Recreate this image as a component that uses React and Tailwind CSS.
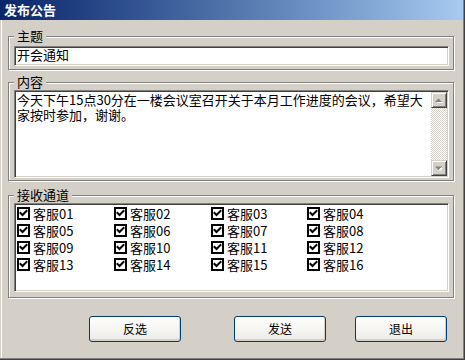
import React from "react";

const font = "font-['SimSun','Noto_Sans_CJK_SC',sans-serif]";

function Group({ label, height, children, className = "" }) {
  return (
    <div
      className={`relative w-[446px] border border-[#808080] shadow-[1px_1px_0_#ffffff,inset_1px_1px_0_#ffffff] ${className}`}
      style={{ height }}
    >
      <div className="absolute left-[5px] top-[-8px] px-[3px] bg-[#d4d0c8] leading-[14px] text-[13px] text-black">
        {label}
      </div>
      {children}
    </div>
  );
}

const sunken =
  "border border-t-[#808080] border-l-[#808080] border-b-white border-r-white shadow-[inset_1px_1px_0_#404040,inset_-1px_-1px_0_#d4d0c8]";

function ScrollBtn({ up }) {
  return (
    <div className="w-[16px] h-[16px] bg-[#d4d0c8] border border-t-[#d4d0c8] border-l-[#d4d0c8] border-b-[#404040] border-r-[#404040] shadow-[inset_1px_1px_0_#ffffff,inset_-1px_-1px_0_#808080] flex items-center justify-center">
      <svg width="8" height="5" viewBox="0 0 8 5">
        {up ? (
          <>
            <path d="M1 5 L4 2 L7 5 Z" fill="#ffffff" transform="translate(1,0)" />
            <path d="M0 4 L3.5 0.5 L7 4 Z" fill="#808080" />
          </>
        ) : (
          <>
            <path d="M1 1 L4 4 L7 1 Z" fill="#ffffff" transform="translate(1,1)" />
            <path d="M0 0.5 L3.5 4 L7 0.5 Z" fill="#808080" />
          </>
        )}
      </svg>
    </div>
  );
}

function Check({ label }) {
  return (
    <div className="flex items-center h-[17px]">
      <div className="w-[13px] h-[13px] border-2 border-black bg-white flex items-center justify-center shrink-0">
        <svg width="9" height="9" viewBox="0 0 9 9">
          <path d="M1.5 4 L3.5 6 L7.5 2" stroke="#000" strokeWidth="2" fill="none" strokeLinecap="square" />
        </svg>
      </div>
      <span className="ml-[3px] leading-[17px] text-[13px] text-black">{label}</span>
    </div>
  );
}

function Button({ children, className = "" }) {
  return (
    <div
      className={`w-[92px] h-[26px] rounded-[3px] border border-[#003c74] bg-gradient-to-b from-[#ffffff] to-[#ecebe6] shadow-[inset_-1px_-2px_0_#d6d0c5] flex items-center justify-center text-[12px] text-black ${className}`}
    >
      {children}
    </div>
  );
}

export default function App() {
  const items = Array.from({ length: 16 }, (_, i) => `客服${String(i + 1).padStart(2, "0")}`);
  return (
    <div className={`w-[465px] h-[360px] bg-[#d4d0c8] border-r border-b border-[#404040] flex flex-col ${font}`}>
      <div className="flex-1 flex flex-col border-r border-b border-[#808080]">
        <div className="h-[20px] shrink-0 bg-gradient-to-r from-[#0a246a] to-[#a6caf0] flex items-center pl-[4px]">
          <span className="text-white font-bold text-[13px] leading-[14px]">发布公告</span>
        </div>
        <div className="flex-1 flex flex-col pl-[1px]">
          <div className="flex-1 flex flex-col border-l border-white pl-[6px]">
            <Group label="主题" height={34} className="mt-[16px]">
              <div className={`ml-[5px] mt-[9px] w-[435px] h-[20px] bg-white ${sunken} pl-[2px] pt-[1px] leading-[14px] text-[13px] text-black`}>
                开会通知
              </div>
            </Group>
            <Group label="内容" height={99} className="mt-[12px]">
              <div className={`ml-[5px] mt-[7px] w-[435px] h-[88px] bg-white ${sunken} flex p-[1px]`}>
                <div className="flex-1 pl-[1px] leading-[15px] text-[13px] text-black whitespace-nowrap">
                  <div>今天下午15点30分在一楼会议室召开关于本月工作进度的会议，希望大</div>
                  <div>家按时参加，谢谢。</div>
                </div>
                <div className="w-[16px] flex flex-col">
                  <ScrollBtn up />
                  <div className="flex-1 bg-[repeating-conic-gradient(#d4d0c8_0_25%,#ffffff_0_50%)] bg-[length:2px_2px]" />
                  <ScrollBtn />
                </div>
              </div>
            </Group>
            <Group label="接收通道" height={103} className="mt-[14px]">
              <div className={`ml-[5px] mt-[7px] w-[435px] h-[89px] bg-white ${sunken} pl-[2px] pt-[1px]`}>
                <div className="grid grid-cols-[97px_97px_96px_96px]">
                  {items.map((t) => (
                    <Check key={t} label={t} />
                  ))}
                </div>
              </div>
            </Group>
            <div className="flex mt-[18px] ml-[81px]">
              <Button>反选</Button>
              <Button className="ml-[53px]">发送</Button>
              <Button className="ml-[29px]">退出</Button>
            </div>
          </div>
        </div>
      </div>
    </div>
  );
}
